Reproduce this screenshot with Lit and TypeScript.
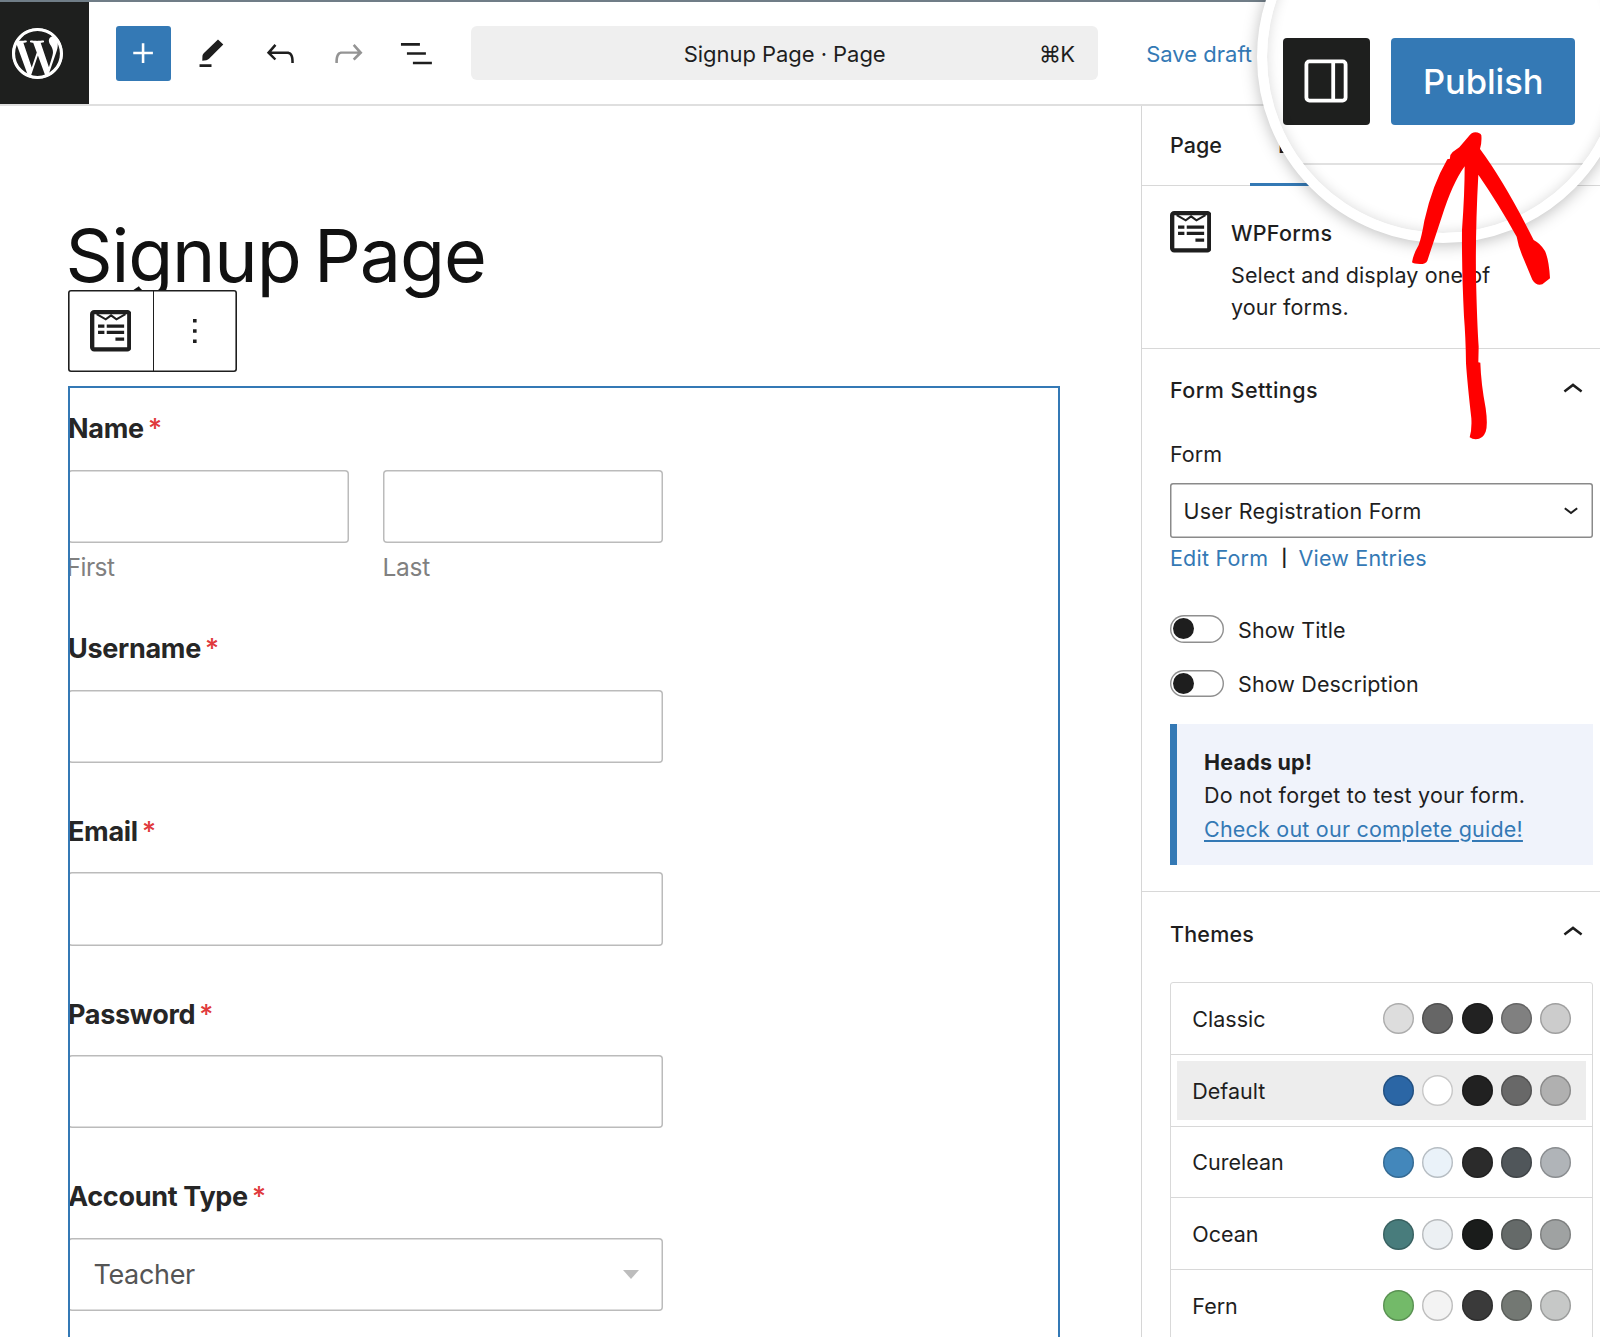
import { LitElement, html, css, svg } from "lit";
import { customElement } from "lit/decorators.js";
import { classMap } from "lit/directives/class-map.js";
import { styleMap } from "lit/directives/style-map.js";

interface Theme {
  name: string;
  colors: string[];
  active?: boolean;
}

const THEMES: Theme[] = [
  { name: "Classic", colors: ["#dddddd", "#666666", "#222222", "#808080", "#cccccc"] },
  { name: "Default", colors: ["#2b66a5", "#ffffff", "#212121", "#686868", "#b0b0b0"], active: true },
  { name: "Curelean", colors: ["#4387bb", "#eaf2f9", "#2b2b2b", "#50565a", "#b0b4b8"] },
  { name: "Ocean", colors: ["#487c7c", "#ecf0f3", "#1a1c1b", "#656a69", "#9fa2a2"] },
  { name: "Fern", colors: ["#73ba69", "#f3f3f3", "#3a3a3a", "#737873", "#c6c8c7"] },
];

const FIELDS = ["Username", "Email", "Password"];

const glyph = (d: string) => svg`<path fill="currentColor" d=${d}></path>`;

const PLUS = glyph("M11 12.5V17.5H12.5V12.5H17.5V11H12.5V6H11V11H6V12.5H11Z");
const PEN = glyph("M6.6 16.3L6.7 13.3Q6.9 12.3 7.6 11.7L15.8 3.8L18.9 6.7L10.7 14.9Q10 15.7 9 15.9ZM5 18.3H12V19.9H5Z");
const UNDO = glyph(
  "M18.3 11.7c-.6-.6-1.4-.9-2.3-.9H6.7l2.9-3.3-1.1-1-4.5 5L8.5 16l1-1-2.7-2.7H16c.5 0 .9.2 1.3.5 1 1 1 3.4 1 4.5v.3h1.5v-.2c0-1.5 0-4.3-1.5-5.7z"
);
const REDO = glyph(
  "M15.6 6.5l-1.1 1 2.9 3.3H8c-.9 0-1.7.3-2.3.9-1.4 1.5-1.4 4.2-1.4 5.6v.2h1.5v-.3c0-1.1 0-3.5 1-4.5.3-.3.7-.5 1.3-.5h9.2L14.5 15l1.1 1.1 4.6-4.6-4.6-5z"
);
const LIST = glyph("M2.9 5.9H14V7.4H2.9ZM6.4 11.3H17.5V12.8H6.4ZM9.9 16.8H21V18.3H9.9Z");

const formsIcon = () => html`<svg class="forms-icon" viewBox="0 0 124 124">
  <rect x="6.5" y="6.5" width="111" height="111" rx="6" fill="none" stroke="#1e1e1e" stroke-width="13"></rect>
  <path d="M20 12L47 28L63 16L79 28L106 12" fill="none" stroke="#1e1e1e" stroke-width="6"></path>
  <path fill="#1e1e1e" d="M24 43H43V53H24ZM50 43H102V53H50ZM24 62H43V72H24ZM50 62H102V72H50ZM76 82H102V92H76Z"></path>
</svg>`;

const chevronUp = () => html`<svg class="chevron" width="20" height="10" viewBox="0 0 20 10">
  <path d="M1.4 8.4L10 1.9L18.6 8.4" fill="none" stroke="#1e1e1e" stroke-width="2.5"></path>
</svg>`;

@customElement("app-root")
export class AppRoot extends LitElement {
  static styles = css`
    :host {
      display: block;
      position: relative;
      width: 1600px;
      height: 1337px;
      overflow: hidden;
      background: #fff;
      color: #1e1e1e;
      font-family: Inter, "Liberation Sans", sans-serif;
      font-size: 21.5px;
    }
    * {
      box-sizing: border-box;
    }
    svg {
      display: block;
    }
    .page {
      display: flex;
      flex-direction: column;
      height: 100%;
      border-top: 2px solid #707d87;
    }
    .header {
      display: flex;
      align-items: center;
      flex: none;
      height: 104px;
      border-bottom: 2px solid #dfdfdf;
    }
    .logo {
      display: flex;
      align-items: center;
      align-self: stretch;
      width: 89px;
      padding-left: 12px;
      background: #1e1f1e;
      color: #fff;
    }
    .tools {
      display: flex;
      gap: 13.3px;
      margin-left: 27px;
    }
    .tool {
      display: flex;
      align-items: center;
      justify-content: center;
      width: 55px;
      height: 55px;
      border-radius: 3px;
    }
    .tool.primary {
      background: #3479b5;
      color: #fff;
    }
    .tool.disabled {
      color: #949494;
    }
    .command {
      display: grid;
      grid-template-columns: 1fr auto 1fr;
      align-items: center;
      width: 627px;
      height: 54px;
      margin-left: 27px;
      padding: 1px 24px 0;
      border-radius: 6px;
      background: #efefef;
      font-size: 22px;
      letter-spacing: -0.05px;
    }
    .command .title {
      grid-column: 2;
    }
    .command .keys {
      justify-self: end;
      letter-spacing: -0.8px;
    }
    .draft {
      margin-left: 48px;
      padding-top: 1px;
      color: #3479b5;
      font-size: 22px;
    }
    .body {
      display: flex;
      flex: 1;
      min-height: 0;
    }
    .canvas {
      flex: 1;
      padding: 109px 81px 0 68px;
    }
    .page-title {
      height: 75px;
      margin: 0 0 0 -2.5px;
      font-size: 73.5px;
      line-height: 81px;
      font-weight: 400;
      letter-spacing: -1.15px;
      word-spacing: -6px;
      color: #111;
    }
    .block-toolbar {
      display: flex;
      position: relative;
      width: 169px;
      height: 82px;
      border-radius: 3px;
      background: #fff;
      box-shadow: inset 0 0 0 1.6px #1e1e1e;
    }
    .block-toolbar .slot {
      display: flex;
      align-items: center;
      justify-content: center;
      width: 84.5px;
    }
    .block-toolbar .slot + .slot {
      border-left: 1px solid #1e1e1e;
    }
    .forms-icon {
      flex: none;
      width: 41.5px;
      height: 41.5px;
    }
    .block {
      position: relative;
      height: 1000px;
      margin-top: 14px;
      padding: 27px 0 0 0;
      color: #262626;
    }
    .block::after {
      content: "";
      position: absolute;
      inset: 0;
      border: 2px solid #3479b5;
    }
    .label {
      height: 32px;
      margin-bottom: 24.6px;
      font-size: 27px;
      line-height: 32px;
      font-weight: 700;
      letter-spacing: -0.3px;
    }
    .req {
      margin-left: -2px;
      color: #e03a3c;
      font-weight: 500;
    }
    .field {
      margin-bottom: 52.8px;
    }
    .name {
      margin-bottom: 51.3px;
    }
    .pair {
      display: flex;
      gap: 34px;
    }
    .half {
      width: 280.5px;
    }
    .input {
      display: flex;
      align-items: center;
      justify-content: space-between;
      width: 595px;
      height: 73.3px;
      padding: 1px 24px 0 25.5px;
      border-radius: 4px;
      box-shadow: inset 0 0 0 1.5px #bbb;
      color: #555;
      font-size: 27px;
      letter-spacing: -0.35px;
    }
    .half .input {
      width: 100%;
    }
    .caption {
      margin-top: 9px;
      color: #808080;
      font-size: 24.5px;
      line-height: 30px;
      letter-spacing: -0.3px;
    }
    .half:first-child .caption {
      margin-left: -1.5px;
      letter-spacing: -0.5px;
    }
    .sidebar {
      width: 459px;
      border-left: 1px solid #d6d6d6;
    }
    .tabs {
      display: flex;
      height: 80px;
      border-bottom: 1px solid #d8d8d8;
      font-weight: 500;
    }
    .tab {
      display: flex;
      align-items: center;
      height: 80px;
      padding: 0 28px 2px;
    }
    .tab.active {
      border-bottom: 3px solid #3479b5;
      padding-bottom: 0;
    }
    .card {
      display: flex;
      gap: 20px;
      height: 162.5px;
      padding: 25px 28px 0 27.5px;
      border-bottom: 1px solid #d8d8d8;
    }
    .card-name {
      padding-top: 5px;
      font-weight: 500;
      line-height: 35px;
      letter-spacing: 0.25px;
    }
    .card-text {
      width: 290px;
      margin-top: 9px;
      line-height: 31.5px;
      letter-spacing: 0.12px;
    }
    .panel {
      padding: 0 7px 0 28px;
    }
    .panel.settings {
      height: 543.5px;
      border-bottom: 1px solid #d8d8d8;
    }
    .panel-head {
      display: flex;
      align-items: center;
      justify-content: space-between;
      height: 83px;
      padding-right: 10.5px;
      font-weight: 500;
      letter-spacing: 0.2px;
    }
    .chevron {
      margin-top: -5px;
    }
    .settings .panel-head {
      letter-spacing: 0.45px;
    }
    .form-label {
      margin-top: 7px;
      line-height: 30px;
    }
    .select {
      display: flex;
      align-items: center;
      justify-content: space-between;
      height: 54.5px;
      margin-top: 14.5px;
      padding: 1.6px 15px 0 13.5px;
      border-radius: 3px;
      box-shadow: inset 0 0 0 1.5px #8a8a8a;
      letter-spacing: 0.24px;
    }
    .links {
      display: flex;
      gap: 11px;
      margin-top: 5.5px;
      line-height: 30px;
      letter-spacing: 0.2px;
    }
    .pipe {
      padding-left: 2px;
      font-size: 17px;
      font-weight: 600;
    }
    .link {
      color: #3479b5;
    }
    .toggles {
      display: grid;
      gap: 24.7px;
      margin-top: 41.5px;
    }
    .toggle {
      display: flex;
      align-items: center;
      gap: 14px;
      height: 30px;
      letter-spacing: 0.12px;
    }
    .track {
      width: 54px;
      height: 27.5px;
      margin-top: -1px;
      padding: 3.2px;
      border-radius: 14px;
      box-shadow: inset 0 0 0 1.4px #8f8f8f;
    }
    .knob {
      width: 21px;
      height: 21px;
      border-radius: 50%;
      background: #1e1e1e;
    }
    .notice {
      height: 140.5px;
      margin-top: 25.3px;
      padding: 21.5px 0 0 27px;
      border-left: 7px solid #3479b5;
      background: #f0f3fb;
      line-height: 33.4px;
      letter-spacing: 0.21px;
    }
    .notice .strong {
      font-weight: 700;
    }
    .notice .link {
      text-decoration: underline;
      text-decoration-thickness: 1.5px;
      text-underline-offset: 3px;
    }
    .themes {
      margin-top: 7px;
      border: 1px solid #d9d9d9;
      border-radius: 3px;
    }
    .theme {
      height: 71.75px;
      padding: 6px;
      border-bottom: 1px solid #d8d8d8;
    }
    .theme-inner {
      display: flex;
      align-items: center;
      justify-content: space-between;
      height: 59.5px;
      padding: 0 15px 0 15.3px;
    }
    .theme-inner.active {
      background: #ededed;
    }
    .swatches {
      display: flex;
      gap: 8.25px;
    }
    .swatch {
      width: 31px;
      height: 31px;
      border-radius: 50%;
      box-shadow: inset 0 0 0 1.4px rgba(0, 0, 0, 0.22);
    }
    .lens {
      position: absolute;
      left: 1257px;
      top: -129px;
      width: 372px;
      height: 372px;
      border: 10.5px solid #fff;
      border-radius: 50%;
      background: #fff;
      box-shadow: 0 2px 16px rgba(0, 0, 0, 0.26);
    }
    .lens-view {
      position: relative;
      width: 100%;
      height: 100%;
      overflow: hidden;
      border-radius: 50%;
    }
    .lens-view::after {
      content: "";
      position: absolute;
      inset: 0;
      border-radius: 50%;
      box-shadow: inset 0 0 13px rgba(0, 0, 0, 0.15);
    }
    .lens-row {
      display: flex;
      gap: 21.5px;
      height: 284px;
      padding: 156.7px 0 0 15.7px;
      border-bottom: 2px solid #e1e1e1;
    }
    .lens-toggle,
    .publish {
      display: flex;
      align-items: center;
      justify-content: center;
      height: 87px;
      border-radius: 4px;
    }
    .lens-toggle {
      width: 87px;
      background: #1e1f1e;
    }
    .publish {
      width: 184px;
      padding-top: 1px;
      background: #3479b5;
      color: #fff;
      font-size: 34.5px;
      font-weight: 500;
      letter-spacing: -0.1px;
    }
    .arrow {
      position: absolute;
      left: 1395px;
      top: 120px;
    }
  `;

  private toolButton(icon: unknown, kind = "") {
    return html`<div class=${classMap({ tool: true, primary: kind === "primary", disabled: kind === "disabled" })}>
      <svg width="41" height="41" viewBox="0 0 24 24">${icon}</svg>
    </div>`;
  }

  private label(text: string) {
    return html`<div class="label">${text} <span class="req">*</span></div>`;
  }

  private toggle(text: string) {
    return html`<div class="toggle"><div class="track"><div class="knob"></div></div><span>${text}</span></div>`;
  }

  private themeRow(theme: Theme) {
    return html`<div class="theme">
      <div class=${classMap({ "theme-inner": true, active: !!theme.active })}>
        <span>${theme.name}</span>
        <div class="swatches">
          ${theme.colors.map((c) => html`<div class="swatch" style=${styleMap({ background: c })}></div>`)}
        </div>
      </div>
    </div>`;
  }

  private header() {
    return html`<div class="header">
      <div class="logo">
        <svg width="51" height="51" viewBox="0 0 24 24">
          ${glyph(
            "M21.469 6.825c.84 1.537 1.318 3.3 1.318 5.175 0 3.979-2.156 7.456-5.363 9.325l3.295-9.527c.615-1.54.82-2.771.82-3.864 0-.405-.026-.78-.07-1.11m-7.981.105c.647-.03 1.232-.105 1.232-.105.582-.075.514-.93-.067-.899 0 0-1.755.135-2.88.135-1.064 0-2.85-.15-2.85-.15-.585-.03-.661.855-.075.885 0 0 .54.061 1.125.09l1.68 4.605-2.37 7.08L5.354 6.9c.649-.03 1.234-.1 1.234-.1.585-.075.516-.93-.065-.896 0 0-1.746.138-2.874.138-.2 0-.438-.008-.69-.015C4.911 3.15 8.235 1.215 12 1.215c2.809 0 5.365 1.072 7.286 2.833-.046-.003-.091-.009-.141-.009-1.06 0-1.812.923-1.812 1.914 0 .89.513 1.643 1.06 2.531.411.72.89 1.643.89 2.977 0 .915-.354 1.994-.821 3.479l-1.075 3.585-3.9-11.61.001.014zM12 22.784c-1.059 0-2.081-.153-3.048-.437l3.237-9.406 3.315 9.087c.024.053.05.101.078.149-1.12.393-2.325.609-3.582.609M1.211 12c0-1.564.336-3.05.935-4.39L7.29 21.709C3.694 19.96 1.212 16.271 1.211 12M12 0C5.385 0 0 5.385 0 12s5.385 12 12 12 12-5.385 12-12S18.615 0 12 0"
          )}
          <circle cx="12" cy="12" r="11.2" fill="none" stroke="currentColor" stroke-width="1.3"></circle>
        </svg>
      </div>
      <div class="tools">
        ${this.toolButton(PLUS, "primary")} ${this.toolButton(PEN)} ${this.toolButton(UNDO)}
        ${this.toolButton(REDO, "disabled")} ${this.toolButton(LIST)}
      </div>
      <div class="command"><span class="title">Signup Page · Page</span><span class="keys">⌘K</span></div>
      <div class="draft">Save draft</div>
    </div>`;
  }

  private canvas() {
    return html`<div class="canvas">
      <h1 class="page-title">Signup Page</h1>
      <div class="block-toolbar">
        <div class="slot">${formsIcon()}</div>
        <div class="slot">
          <svg width="4" height="26" viewBox="0 0 4 26"><path fill="#1e1e1e" d="M0 1H3.6V4.6H0ZM0 11.2H3.6V14.8H0ZM0 21.4H3.6V25H0Z"></path></svg>
        </div>
      </div>
      <div class="block">
        <div class="name">
          ${this.label("Name")}
          <div class="pair">
            <div class="half"><div class="input"></div><div class="caption">First</div></div>
            <div class="half"><div class="input"></div><div class="caption">Last</div></div>
          </div>
        </div>
        ${FIELDS.map((f) => html`<div class="field">${this.label(f)}<div class="input"></div></div>`)}
        <div class="field">
          ${this.label("Account Type")}
          <div class="input">
            <span>Teacher</span>
            <svg width="16" height="9" viewBox="0 0 16 9"><path fill="#bdbdbd" d="M0 0H16L8 9Z"></path></svg>
          </div>
        </div>
      </div>
    </div>`;
  }

  private sidebar() {
    return html`<div class="sidebar">
      <div class="tabs"><div class="tab">Page</div><div class="tab active">Block</div></div>
      <div class="card">
        ${formsIcon()}
        <div>
          <div class="card-name">WPForms</div>
          <div class="card-text">Select and display one of your forms.</div>
        </div>
      </div>
      <div class="panel settings">
        <div class="panel-head"><span>Form Settings</span>${chevronUp()}</div>
        <div class="form-label">Form</div>
        <div class="select">
          <span>User Registration Form</span>
          <svg width="14" height="8" viewBox="0 0 14 8"><path d="M.8 1.2L7 6L13.2 1.2" fill="none" stroke="#1e1e1e" stroke-width="2"></path></svg>
        </div>
        <div class="links"><span class="link">Edit Form</span><span class="pipe">|</span><span class="link">View Entries</span></div>
        <div class="toggles">${this.toggle("Show Title")}${this.toggle("Show Description")}</div>
        <div class="notice">
          <div class="strong">Heads up!</div>
          <div>Do not forget to test your form.</div>
          <div><span class="link">Check out our complete guide!</span></div>
        </div>
      </div>
      <div class="panel">
        <div class="panel-head"><span>Themes</span>${chevronUp()}</div>
        <div class="themes">${THEMES.map((t) => this.themeRow(t))}</div>
      </div>
    </div>`;
  }

  private lens() {
    return html`<div class="lens">
        <div class="lens-view">
          <div class="lens-row">
            <div class="lens-toggle">
              <svg width="44" height="44" viewBox="0 0 44 44" fill="none" stroke="#fff" stroke-width="3.8">
                <rect x="2.4" y="2.4" width="39.2" height="39.2" rx="3"></rect>
                <path d="M29.2 2V42"></path>
              </svg>
            </div>
            <div class="publish">Publish</div>
          </div>
        </div>
      </div>
      <svg class="arrow" width="180" height="330" viewBox="0 0 540 990">
        <path
          fill="#f00"
          d="M241 37Q256 38 259 46Q261 66 255 87Q330 188 416 360Q436 370 450 393Q462 420 465 475L442 493Q424 499 412 479L381 405Q369 375 365 350Q310 251 250 164Q241 330 243 470Q246 610 251 680L250 727L256 728Q258 790 272 865Q279 915 272 935Q264 957 242 958Q232 958 224 952Q231 930 229 895Q217 790 213 730Q212 650 207 590Q200 450 201 330Q209 220 209 139Q172 190 140 292L97 422Q93 432 75 432Q56 432 51 427Q55 402 71 375Q80 350 88 302Q112 195 157 118L165 116Q164 104 173 96L193 82L220 50Q230 37 241 37Z"
        ></path>
      </svg>`;
  }

  render() {
    return html`<div class="page">
        ${this.header()}
        <div class="body">${this.canvas()}${this.sidebar()}</div>
      </div>
      ${this.lens()}`;
  }
}
